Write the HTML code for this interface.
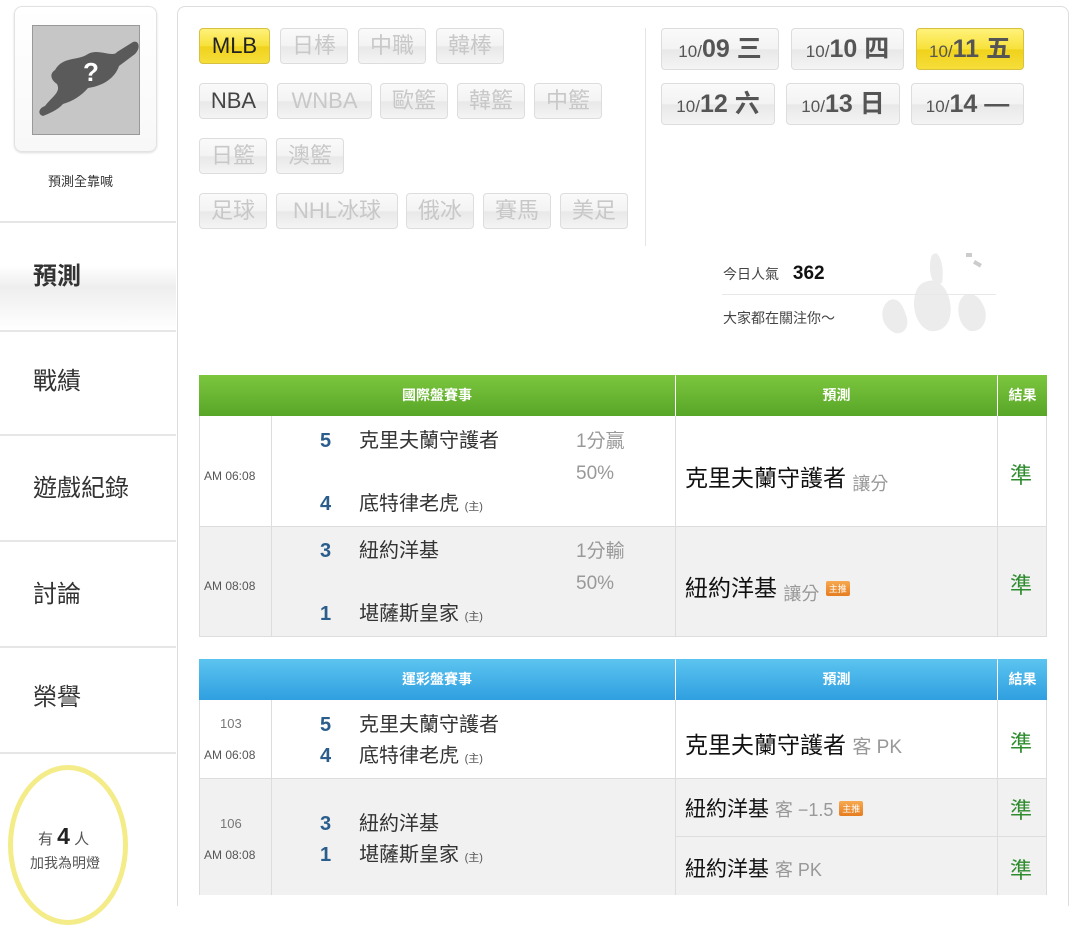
<!DOCTYPE html>
<html><head><meta charset="utf-8"><style>
*{box-sizing:border-box;margin:0;padding:0}
body{width:1080px;height:900px;overflow:hidden;background:#fff;font-family:"Liberation Sans","Noto Sans CJK TC",sans-serif;color:#333;position:relative}
.a{position:absolute}
.btn{position:absolute;height:36px;border:1px solid #ddd;border-radius:4px;background:linear-gradient(#fafafa,#f3f3f3 50%,#e8e8e8 52%,#f4f4f4);color:#c8c8c8;font-size:22px;line-height:34px;text-align:center}
.on{background:linear-gradient(#fff27a,#f7e13a 50%,#f0d21c 52%,#f6de3a);border-color:#d8c040;color:#222}
.blk{color:#444}
.date{height:42px;line-height:40px;font-size:25px;color:#555;font-weight:bold}
.date small{font-size:17px;font-weight:normal}
.nav{position:absolute;left:0;width:176px;border-bottom:2px solid #e6e6e6;font-size:24px;color:#333;padding-left:33px}
.tb{position:absolute;left:199px;width:848px;border:1px solid #ddd}
.hd{position:absolute;color:#fff;font-size:14px;font-weight:bold;text-align:center;line-height:41px;height:41px}
.vl{position:absolute;width:1px;background:#ddd}
.row{position:absolute;left:320px;font-size:20px;color:#333;line-height:26px;white-space:nowrap}
.row b{display:inline-block;width:39px;color:#2a5d8c;font-size:20px}
.z{font-size:11px;color:#555}
.g{color:#2e8b2e;font-size:22px}
.tag{display:inline-block;background:linear-gradient(#f7a950,#e57d1f);color:#fff;font-size:9px;padding:1px 3px;border-radius:2px;vertical-align:4px}
</style></head><body>
<div class="a" style="left:14px;top:6px;width:143px;height:146px;border:1px solid #e2e2e2;border-radius:8px;box-shadow:0 1px 2px #ddd;background:linear-gradient(#fff,#f8f8f8)"></div>
<div class="a" style="left:32px;top:25px;width:108px;height:110px;background:#c6c6c6;border:1px solid #999">
<svg width="108" height="110" viewBox="0 0 108 110"><path d="M22 44 C30 30 45 35 55 28 C65 22 80 32 84 26 L100 16 C106 14 108 22 102 28 L86 40 C82 52 70 60 55 62 C48 70 40 75 30 78 C25 84 15 88 10 90 C4 88 6 82 12 80 C20 70 28 66 24 58 C18 54 16 48 22 44Z" fill="#5a5a5a"/><text x="50" y="55" fill="#fff" font-size="26" font-weight="bold" font-family="Liberation Sans">?</text></svg></div>
<div class="a" style="left:48px;top:171px;font-size:13px;color:#333">預測全靠喊</div>
<div class="a" style="left:0;top:221px;width:176px;height:2px;background:#e6e6e6"></div>
<div class="nav" style="top:223px;height:107px;line-height:107px;font-weight:bold;background:linear-gradient(#fff,#fff 40%,#eee 60%,#fff);border-bottom:none">預測</div>
<div class="a" style="left:0;top:330px;width:176px;height:2px;background:#e6e6e6"></div>
<div class="nav" style="top:332px;height:104px;line-height:100px">戰績</div>
<div class="nav" style="top:436px;height:106px;line-height:106px">遊戲紀錄</div>
<div class="nav" style="top:542px;height:106px;line-height:106px">討論</div>
<div class="nav" style="top:648px;height:106px;line-height:100px">榮譽</div>
<div class="a" style="left:8px;top:765px;width:120px;height:160px;border:5px solid #f4ec88;border-radius:50%"></div>
<div class="a" style="left:38px;top:823px;font-size:15px;color:#555">有 <b style="font-size:23px;color:#222">4</b> 人</div>
<div class="a" style="left:30px;top:853px;font-size:14px;color:#555">加我為明燈</div>
<div class="a" style="left:177px;top:6px;width:892px;height:900px;border:1px solid #ddd;border-radius:8px 8px 0 0;border-bottom:none"></div>
<div class="a" style="left:645px;top:28px;width:1px;height:218px;background:#e4e4e4"></div>
<div class="btn on" style="left:199px;top:28px;width:71px">MLB</div>
<div class="btn" style="left:280px;top:28px;width:68px">日棒</div>
<div class="btn" style="left:358px;top:28px;width:68px">中職</div>
<div class="btn" style="left:436px;top:28px;width:68px">韓棒</div>
<div class="btn blk" style="left:199px;top:83px;width:69px">NBA</div>
<div class="btn" style="left:277px;top:83px;width:95px">WNBA</div>
<div class="btn" style="left:380px;top:83px;width:68px">歐籃</div>
<div class="btn" style="left:457px;top:83px;width:68px">韓籃</div>
<div class="btn" style="left:534px;top:83px;width:68px">中籃</div>
<div class="btn" style="left:199px;top:138px;width:68px">日籃</div>
<div class="btn" style="left:276px;top:138px;width:68px">澳籃</div>
<div class="btn" style="left:199px;top:193px;width:68px">足球</div>
<div class="btn" style="left:276px;top:193px;width:122px">NHL冰球</div>
<div class="btn" style="left:406px;top:193px;width:68px">俄冰</div>
<div class="btn" style="left:483px;top:193px;width:68px">賽馬</div>
<div class="btn" style="left:560px;top:193px;width:68px">美足</div>
<div class="btn date" style="left:661px;top:28px;width:118px"><small>10/</small>09 三</div>
<div class="btn date" style="left:791px;top:28px;width:113px"><small>10/</small>10 四</div>
<div class="btn date on" style="left:916px;top:28px;width:108px"><small>10/</small>11 五</div>
<div class="btn date" style="left:661px;top:83px;width:114px"><small>10/</small>12 六</div>
<div class="btn date" style="left:786px;top:83px;width:114px"><small>10/</small>13 日</div>
<div class="btn date" style="left:911px;top:83px;width:113px"><small>10/</small>14 —</div>
<svg class="a" style="left:870px;top:245px" width="130" height="100"><g fill="#ececec"><path d="M20 55 C10 60 8 80 25 88 C35 90 40 80 36 70 C33 60 28 52 20 55Z"/><path d="M50 40 C40 50 42 80 60 86 C78 88 85 70 78 50 C72 35 60 32 50 40Z"/><path d="M95 50 C85 55 86 80 100 86 C115 88 120 70 112 58 C108 50 100 47 95 50Z"/><path d="M62 10 C58 20 60 35 66 40 L72 38 C74 25 72 12 66 8Z"/></g><g fill="#ccc"><rect x="105" y="15" width="8" height="4" transform="rotate(30 105 15)"/><rect x="96" y="8" width="6" height="4"/></g></svg>
<div class="a" style="left:723px;top:263px;font-size:14px;color:#444">今日人氣 <b style="font-size:19px;color:#111;margin-left:10px">362</b></div>
<div class="a" style="left:722px;top:294px;width:274px;height:1px;background:#e8e8e8"></div>
<div class="a" style="left:723px;top:308px;font-size:14px;color:#444">大家都在關注你～</div>
<div class="tb" style="top:375px;height:262px"></div>
<div class="hd" style="left:199px;top:375px;width:476px;background:linear-gradient(#7cc63e,#58a628)">國際盤賽事</div>
<div class="hd" style="left:676px;top:375px;width:321px;background:linear-gradient(#7cc63e,#58a628)">預測</div>
<div class="hd" style="left:998px;top:375px;width:49px;background:linear-gradient(#7cc63e,#58a628)">結果</div>
<div class="a" style="left:200px;top:526px;width:846px;height:110px;background:#f1f1f1;border-top:1px solid #ddd"></div>
<div class="vl" style="left:271px;top:416px;height:220px"></div>
<div class="vl" style="left:675px;top:416px;height:220px"></div>
<div class="vl" style="left:997px;top:416px;height:220px"></div>
<div class="a z" style="left:204px;top:469px;font-size:12px">AM 06:08</div>
<div class="a z" style="left:204px;top:579px;font-size:12px">AM 08:08</div>
<div class="row" style="top:428px"><b>5</b>克里夫蘭守護者</div>
<div class="row" style="top:491px"><b>4</b>底特律老虎 <span class="z">(主)</span></div>
<div class="a" style="left:576px;top:426px;font-size:19px;color:#999;line-height:32px">1分贏<br>50%</div>
<div class="row" style="top:538px"><b>3</b>紐約洋基</div>
<div class="row" style="top:601px"><b>1</b>堪薩斯皇家 <span class="z">(主)</span></div>
<div class="a" style="left:576px;top:536px;font-size:19px;color:#999;line-height:32px">1分輸<br>50%</div>
<div class="a" style="left:685px;top:459px;font-size:23px;color:#111">克里夫蘭守護者 <span style="font-size:18px;color:#999;vertical-align:-4px">讓分</span></div>
<div class="a" style="left:685px;top:569px;font-size:23px;color:#111">紐約洋基 <span style="font-size:18px;color:#999;vertical-align:-4px">讓分</span> <span class="tag">主推</span></div>
<div class="a g" style="left:1010px;top:458px">準</div>
<div class="a g" style="left:1010px;top:568px">準</div>
<div class="tb" style="top:659px;height:236px"></div>
<div class="hd" style="left:199px;top:659px;width:476px;background:linear-gradient(#5cc4f0,#2f9fe0)">運彩盤賽事</div>
<div class="hd" style="left:676px;top:659px;width:321px;background:linear-gradient(#5cc4f0,#2f9fe0)">預測</div>
<div class="hd" style="left:998px;top:659px;width:49px;background:linear-gradient(#5cc4f0,#2f9fe0)">結果</div>
<div class="a" style="left:200px;top:778px;width:846px;height:117px;background:#f1f1f1;border-top:1px solid #ddd"></div>
<div class="a" style="left:676px;top:836px;width:370px;height:1px;background:#ddd"></div>
<div class="vl" style="left:271px;top:700px;height:195px"></div>
<div class="vl" style="left:675px;top:700px;height:195px"></div>
<div class="vl" style="left:997px;top:700px;height:195px"></div>
<div class="a z" style="left:220px;top:716px;font-size:13px;color:#777">103</div>
<div class="a z" style="left:204px;top:748px;font-size:12px">AM 06:08</div>
<div class="a z" style="left:220px;top:816px;font-size:13px;color:#777">106</div>
<div class="a z" style="left:204px;top:848px;font-size:12px">AM 08:08</div>
<div class="row" style="top:712px"><b>5</b>克里夫蘭守護者</div>
<div class="row" style="top:743px"><b>4</b>底特律老虎 <span class="z">(主)</span></div>
<div class="row" style="top:811px"><b>3</b>紐約洋基</div>
<div class="row" style="top:842px"><b>1</b>堪薩斯皇家 <span class="z">(主)</span></div>
<div class="a" style="left:685px;top:726px;font-size:23px;color:#111">克里夫蘭守護者 <span style="font-size:19px;color:#999">客 PK</span></div>
<div class="a" style="left:685px;top:793px;font-size:21px;color:#111">紐約洋基 <span style="font-size:18px;color:#999">客 −1.5</span> <span class="tag">主推</span></div>
<div class="a" style="left:685px;top:853px;font-size:21px;color:#111">紐約洋基 <span style="font-size:18px;color:#999">客 PK</span></div>
<div class="a g" style="left:1010px;top:726px">準</div>
<div class="a g" style="left:1010px;top:793px">準</div>
<div class="a g" style="left:1010px;top:853px">準</div>
</body></html>
